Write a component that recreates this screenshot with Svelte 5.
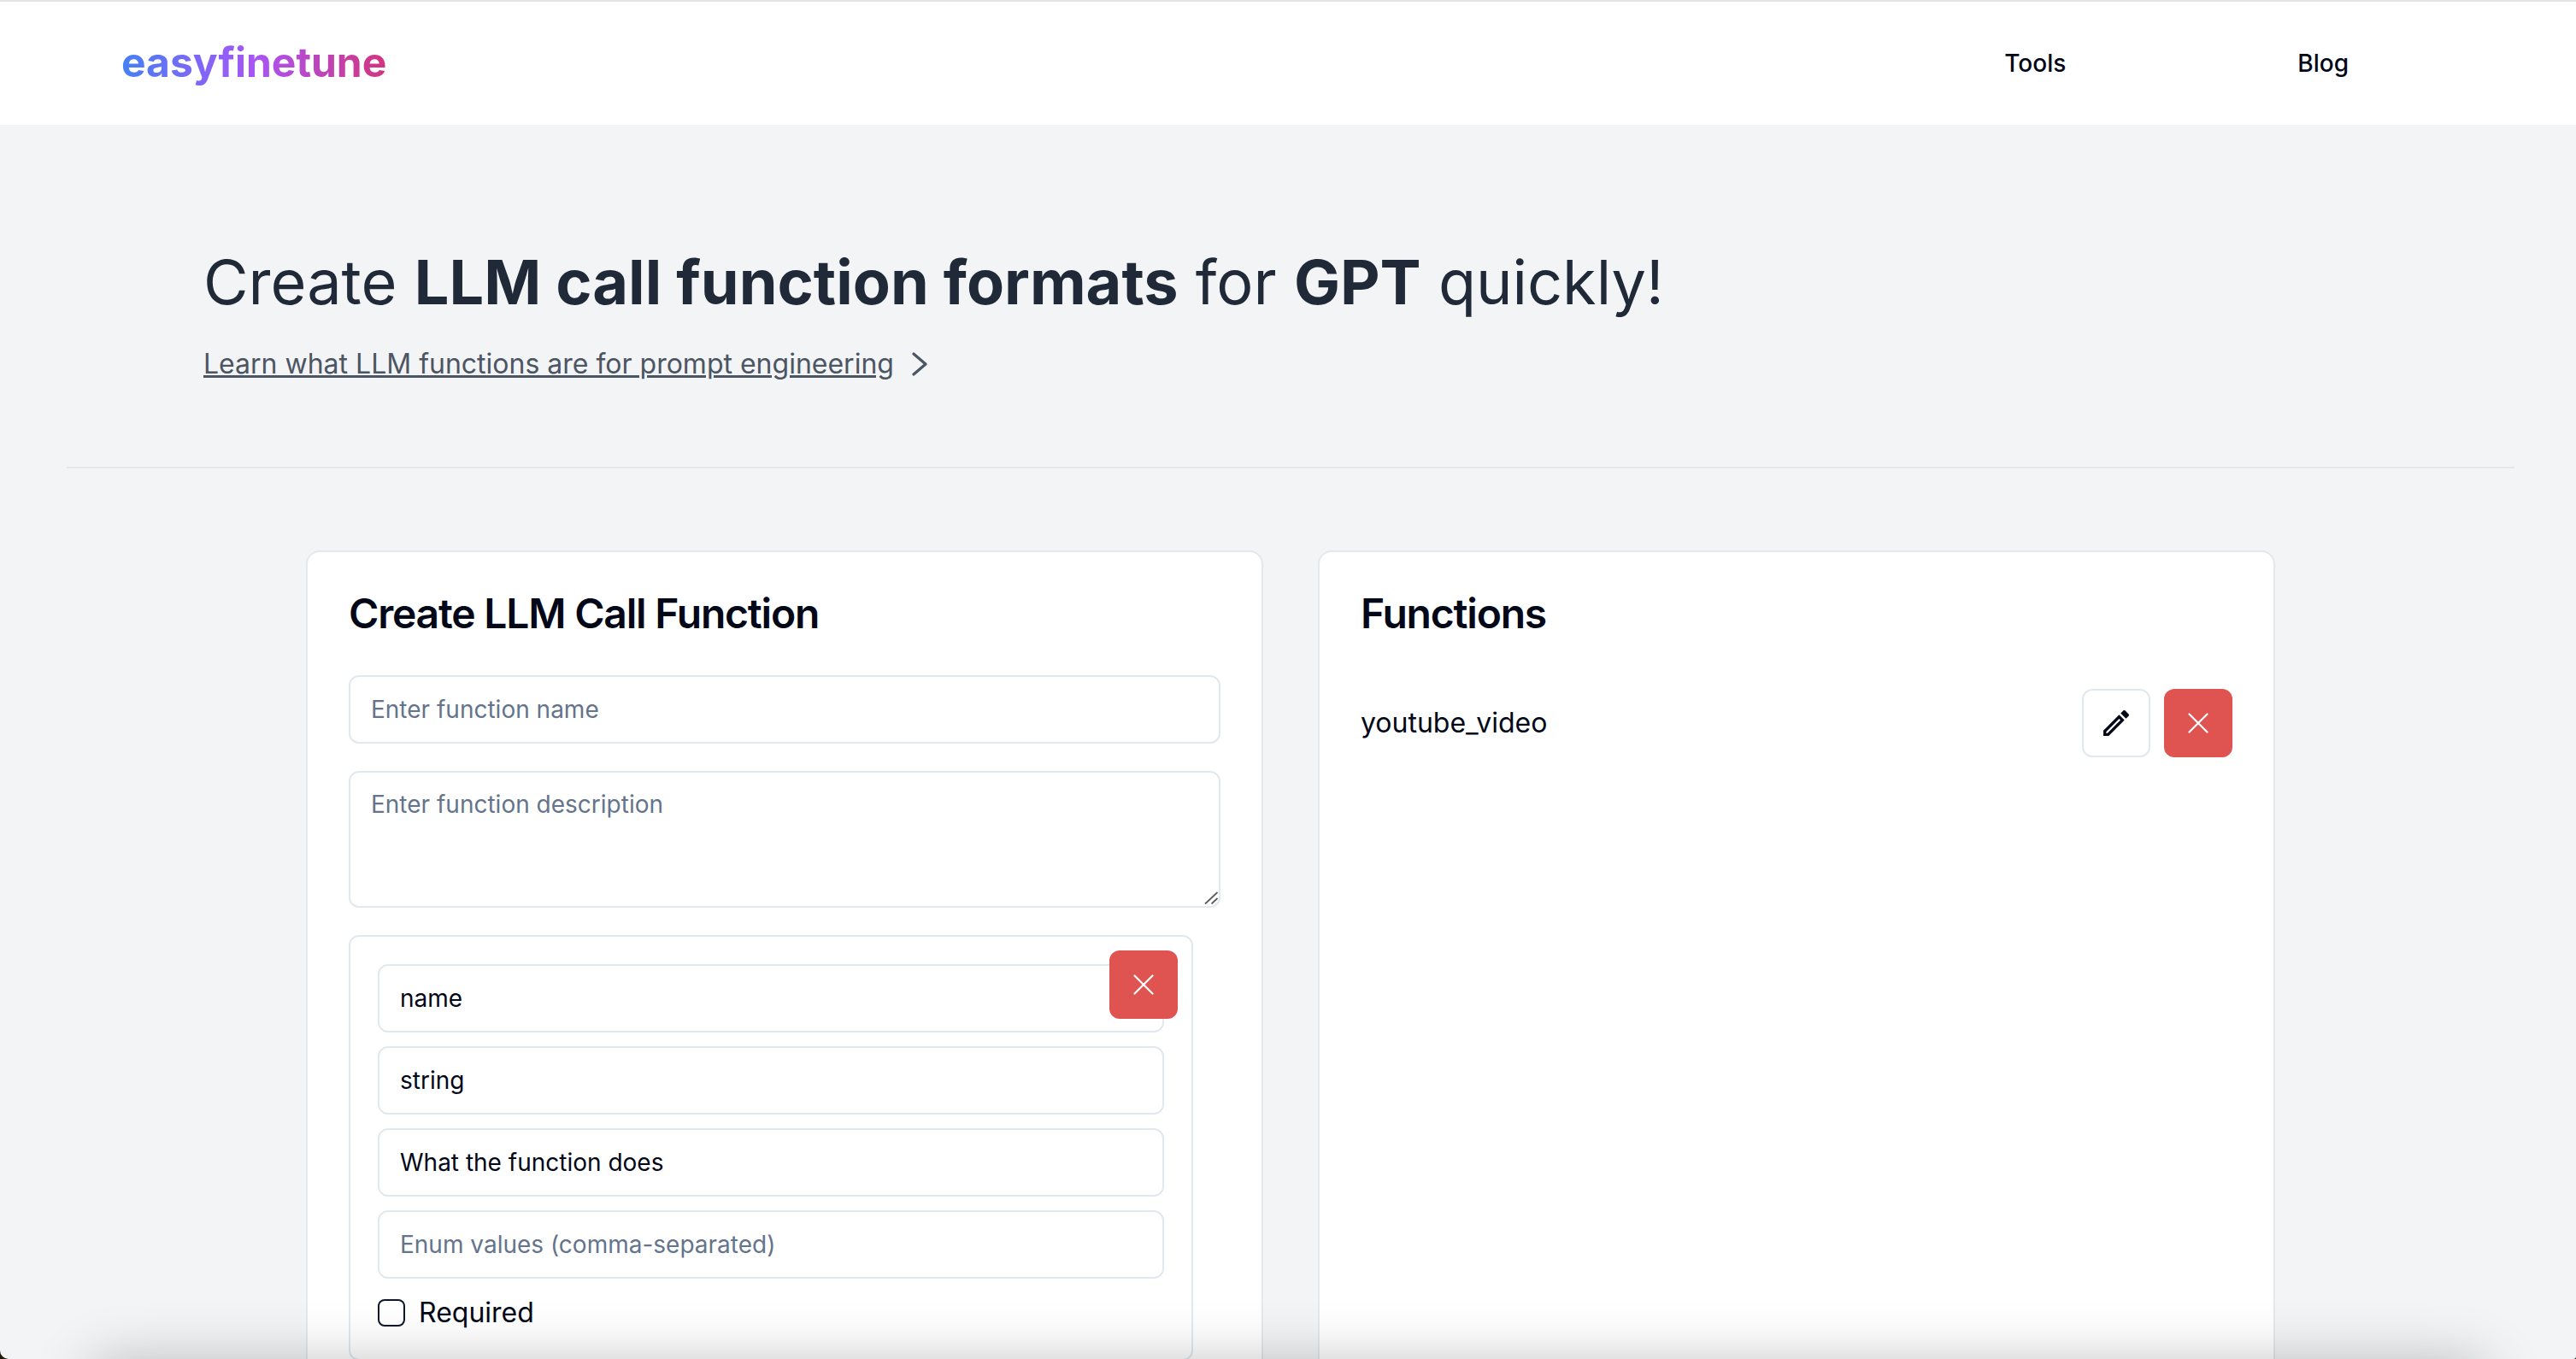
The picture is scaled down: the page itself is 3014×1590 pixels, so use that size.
<script>
  const fields = [
    { value: 'name', placeholder: '' },
    { value: 'string', placeholder: '' },
    { value: 'What the function does', placeholder: '' },
    { value: '', placeholder: 'Enum values (comma-separated)' }
  ];
</script>

<div class="page">
  <header class="top">
    <a class="logo" href="#top">easyfinetune</a>
    <nav class="nav">
      <a href="#tools">Tools</a>
      <a href="#blog">Blog</a>
    </nav>
  </header>

  <section class="hero">
    <h1>Create <b>LLM call function formats</b> for <b>GPT</b> quickly!</h1>
    <div class="learn">
      <a href="#learn">Learn what LLM functions are for prompt engineering</a>
      <svg viewBox="0 0 18 28" width="18" height="28" aria-hidden="true"><path d="M2 2l14 12L2 26" fill="none" stroke="#4b5563" stroke-width="3.2" stroke-linecap="round" stroke-linejoin="round"/></svg>
    </div>
  </section>

  <hr class="rule" />

  <main class="cols">
    <section class="card">
      <h2>Create LLM Call Function</h2>
      <div class="form">
        <input class="field" placeholder="Enter function name" />
        <div class="areawrap">
          <textarea class="field area" placeholder="Enter function description"></textarea>
          <svg class="grip" viewBox="0 0 16 15" width="16" height="15" aria-hidden="true"><path d="M1 14.5L15.5 1M8.5 14.5L15.5 8" fill="none" stroke="#5a5a5a" stroke-width="1.8"/></svg>
        </div>
        <div class="param">
          <button class="del over" aria-label="Remove parameter">
            <svg viewBox="0 0 24 24" width="24" height="24"><path d="M1.5 1.5l21 21M22.5 1.5l-21 21" stroke="#fff" stroke-width="2.2" stroke-linecap="round"/></svg>
          </button>
          {#each fields as f}
            <input class="field" value={f.value} placeholder={f.placeholder} />
          {/each}
          <label class="req"><span class="box"></span>Required</label>
        </div>
      </div>
    </section>

    <section class="card">
      <h2>Functions</h2>
      <div class="row">
        <span class="fname">youtube_video</span>
        <div class="acts">
          <button class="edit" aria-label="Edit">
            <svg viewBox="0 0 24 24" width="40" height="40"><path fill="#020817" d="M14.06 9.02l.92.92L5.92 19H5v-.92l9.06-9.06M17.66 3c-.25 0-.51.1-.7.29l-1.83 1.83 3.75 3.75 1.83-1.83c.39-.39.39-1.02 0-1.41l-2.34-2.34c-.2-.2-.45-.29-.71-.29zm-3.6 3.19L3 17.25V21h3.75L17.81 9.94l-3.75-3.75z"/></svg>
          </button>
          <button class="del" aria-label="Delete">
            <svg viewBox="0 0 24 24" width="24" height="24"><path d="M1.5 1.5l21 21M22.5 1.5l-21 21" stroke="#fff" stroke-width="2.2" stroke-linecap="round"/></svg>
          </button>
        </div>
      </div>
    </section>
  </main>

  <div class="shade"></div>
</div>

<style>
  :global(body) { margin: 0; background: #1c1a05; }
  .page {
    position: relative;
    height: 1590px;
    overflow: hidden;
    border-radius: 0 0 3px 10px;
    background: #f3f4f6;
    font-family: Inter, "Liberation Sans", sans-serif;
    color: #020817;
  }
  .top {
    box-sizing: border-box;
    height: 146px;
    border-top: 2px solid #e2e2e2;
    background: #fff;
    display: flex;
    align-items: center;
    justify-content: space-between;
    padding: 0 266px 0 142px;
  }
  .logo {
    margin-bottom: 4px;
    font-size: 48px;
    font-weight: 700;
    text-decoration: none;
    background: linear-gradient(90deg, #4480f5, #a855f7, #d2347f);
    -webkit-background-clip: text;
    background-clip: text;
    color: transparent;
  }
  .nav { display: flex; gap: 271px; }
  .nav a { font-size: 28px; font-weight: 500; color: #020817; text-decoration: none; }
  .hero { padding: 140px 0 0 238px; height: 400px; box-sizing: border-box; }
  h1 {
    margin: 0;
    font-size: 72px;
    line-height: 88px;
    font-weight: 400;
    color: #1f2937;
  }
  h1 b { font-weight: 700; }
  .learn { margin-top: 28px; display: flex; align-items: center; gap: 21px; }
  .learn a { font-size: 32px; line-height: 48px; color: #4b5563; text-decoration: underline; }
  .rule { margin: 0 72px 0 78px; border: 0; border-top: 2px solid #e5e7eb; }
  .cols { display: flex; gap: 64px; padding: 96px 0 0 358px; }
  .card {
    box-sizing: border-box;
    width: 1120px;
    min-height: 1200px;
    padding: 40px 48px 48px;
    background: #fff;
    border: 2px solid #e5e7eb;
    border-radius: 16px;
  }
  h2 {
    margin: 0 0 40px;
    font-size: 48px;
    line-height: 64px;
    font-weight: 600;
    letter-spacing: -1.2px;
    color: #020817;
  }
  .form { display: flex; flex-direction: column; gap: 32px; }
  .field {
    box-sizing: border-box;
    display: block;
    width: 100%;
    height: 80px;
    padding: 0 24px;
    border: 2px solid #e2e8f0;
    border-radius: 12px;
    background: #fff;
    font: 400 28px Inter, "Liberation Sans", sans-serif;
    color: #020817;
    outline: none;
  }
  .field::placeholder { color: #64748b; opacity: 1; }
  .areawrap { position: relative; }
  .area { height: 160px; padding: 20px 24px; resize: none; }
  .grip { position: absolute; right: 3px; bottom: 4px; pointer-events: none; }
  .param {
    position: relative;
    box-sizing: border-box;
    width: 988px;
    padding: 32px 32px 30px;
    border: 2px solid #e2e8f0;
    border-radius: 12px;
    display: flex;
    flex-direction: column;
    gap: 16px;
  }
  .del, .edit {
    box-sizing: border-box;
    width: 80px;
    height: 80px;
    padding: 0;
    border-radius: 12px;
    display: flex;
    align-items: center;
    justify-content: center;
  }
  .del { border: 0; background: #df5350; }
  .edit { border: 2px solid #e2e8f0; background: #fff; }
  .over { position: absolute; top: 16px; right: 16px; }
  .req { display: flex; align-items: center; gap: 16px; font-size: 32px; line-height: 48px; color: #020817; }
  .box { box-sizing: border-box; width: 32px; height: 32px; border: 2px solid #0f172a; border-radius: 8px; }
  .row {
    display: flex;
    align-items: center;
    justify-content: space-between;
    margin-top: 56px;
    font-size: 32px;
    color: #020817;
  }
  .fname { padding-bottom: 2px; }
  .acts { display: flex; gap: 16px; }
  .shade {
    position: absolute;
    left: 110px;
    right: 110px;
    top: 1600px;
    height: 100px;
    background: #000;
    box-shadow: 0 0 70px rgba(0, 0, 0, 0.3);
    pointer-events: none;
  }
</style>
